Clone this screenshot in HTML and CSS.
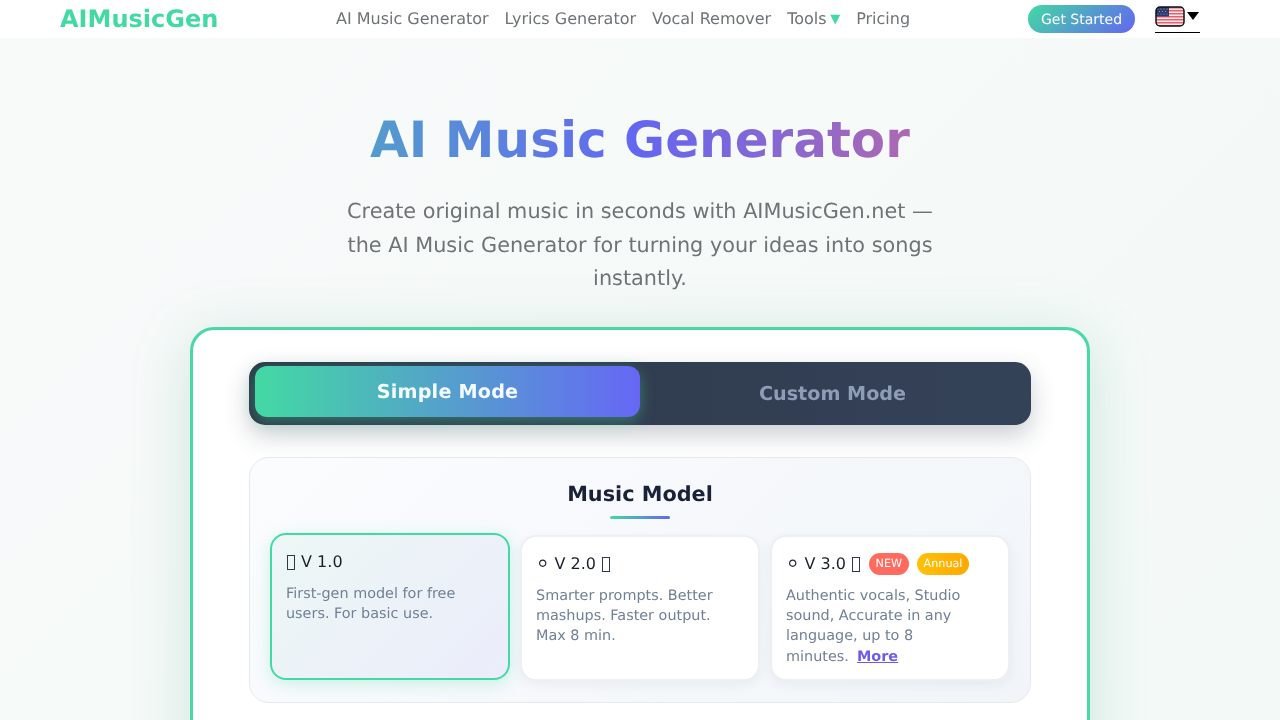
FILE: index.html
```html
<!DOCTYPE html>
<html lang="en">
<head>
<meta charset="utf-8">
<title>AI Music Generator</title>
<link rel="stylesheet" href="styles.css">
</head>
<body>
<header class="header">
  <div class="logo">AIMusicGen</div>
  <nav class="nav">
    <a>AI Music Generator</a>
    <a>Lyrics Generator</a>
    <a>Vocal Remover</a>
    <a class="tools">Tools <span class="caret">▼</span></a>
    <a>Pricing</a>
  </nav>
  <div class="actions">
    <button class="cta">Get Started</button>
    <div class="lang">
      <svg class="flag" width="30" height="21" viewBox="0 0 30 21">
        <defs><clipPath id="fc"><rect x="1" y="1" width="28" height="19" rx="4"/></clipPath></defs>
        <g clip-path="url(#fc)">
          <rect width="30" height="21" fill="#f9e9ea"/>
          <g fill="#e8606e">
            <rect y="1" width="30" height="1.500"/>
            <rect y="4" width="30" height="1.500"/>
            <rect y="7" width="30" height="1.500"/>
            <rect y="10" width="30" height="1.500"/>
            <rect y="13" width="30" height="1.500"/>
            <rect y="16" width="30" height="1.500"/>
            <rect y="19" width="30" height="1.500"/>
          </g>
          <rect width="14" height="10.500" fill="#2c3a6e"/>
          <g fill="#aab4dc"><circle cx="3" cy="3" r=".5"/><circle cx="6" cy="3" r=".5"/><circle cx="9" cy="3" r=".5"/><circle cx="12" cy="3" r=".5"/><circle cx="4.500" cy="5.500" r=".5"/><circle cx="7.500" cy="5.500" r=".5"/><circle cx="10.500" cy="5.500" r=".5"/><circle cx="3" cy="8" r=".5"/><circle cx="6" cy="8" r=".5"/><circle cx="9" cy="8" r=".5"/><circle cx="12" cy="8" r=".5"/></g>
        </g>
        <rect x="1" y="1" width="28" height="19" rx="4" fill="none" stroke="#111" stroke-width="1.500"/>
      </svg>
      <svg class="arrow" width="12" height="8" viewBox="0 0 12 8"><path d="M0 0h12L6 8z" fill="#000"/></svg>
    </div>
  </div>
</header>
<main class="main">
  <h1 class="title">AI Music Generator</h1>
  <p class="subtitle">Create original music in seconds with AIMusicGen.net — the AI Music Generator for turning your ideas into songs instantly.</p>
  <section class="panel">
    <div class="modes">
      <button class="mode mode-active">Simple Mode</button>
      <button class="mode">Custom Mode</button>
    </div>
    <div class="models">
      <h2 class="models-title">Music Model</h2>
      <div class="rule"></div>
      <div class="cards">
        <article class="card card-active">
          <div class="card-head"><span><span class="tofu"></span> V 1.0</span></div>
          <p class="card-text">First-gen model for free users. For basic use.</p>
        </article>
        <article class="card">
          <div class="card-head"><span>⚪ V 2.0 <span class="tofu"></span></span></div>
          <p class="card-text">Smarter prompts. Better mashups. Faster output. Max 8 min.</p>
        </article>
        <article class="card">
          <div class="card-head"><span>⚪ V 3.0 <span class="tofu"></span></span><span class="badge badge-new">NEW</span><span class="badge badge-annual">Annual</span></div>
          <p class="card-text">Authentic vocals, Studio sound, Accurate in any language, up to 8 minutes.&nbsp;&nbsp;<a class="more">More</a></p>
        </article>
      </div>
    </div>
  </section>
</main>
</body>
</html>
```
FILE: styles.css
```css
* { box-sizing: border-box; }
html, body { margin: 0; height: 720px; overflow: hidden; }
body {
  font-family: "DejaVu Sans", sans-serif;
  text-rendering: geometricPrecision;
  background: linear-gradient(135deg, #f8fafa 0%, #f3f9f7 100%);
  color: #1a202c;
}
.header {
  height: 38px;
  background: #fff;
  padding: 0 80px 0 60px;
  display: flex;
  align-items: center;
  will-change: transform;
}
.logo {
  font-size: 24px;
  font-weight: 700;
  color: #43d9a3;
  width: 276px;
}
.nav { display: flex; gap: 16px; font-size: 16px; line-height: 20px; color: #6f7376; }
.caret { color: #43d9a3; font-size: 13px; margin-left: -1.500px; vertical-align: 1px; }
.actions { margin-left: auto; display: flex; align-items: flex-start; gap: 20px; }
.cta {
  width: 107px;
  height: 28px;
  padding: 1px 0 0;
  border: 0;
  border-radius: 14px;
  background: linear-gradient(135deg, #43d9a3, #6366f1);
  color: #fff;
  font: 14px "DejaVu Sans", sans-serif;
  text-rendering: geometricPrecision;
}
.lang {
  width: 45px;
  height: 28px;
  border-bottom: 1px solid #000;
  display: flex;
  align-items: flex-start;
}
.flag { display: block; margin-top: 1px; }
.arrow { margin: 7px 0 0 2px; }
.main {
  display: flex;
  flex-direction: column;
  align-items: center;
  padding: 66px 60px 0;
  will-change: transform;
}
.title {
  margin: 0;
  width: 1160px;
  text-align: center;
  font-size: 50px;
  line-height: 72px;
  font-weight: 700;
  background: linear-gradient(90deg, #43d9a3, #6366f1 50%, #ff6b6b);
  background-clip: text;
  -webkit-background-clip: text;
  color: transparent;
}
.subtitle {
  margin: 19.400px 0 0;
  width: 600px;
  text-align: center;
  font-size: 20.800px;
  line-height: 33.280px;
  color: #6f7376;
}
.panel {
  margin-top: 31.800px;
  width: 900px;
  height: 500px;
  flex: none;
  background: #fff;
  border: 3px solid #4ad9a5;
  border-radius: 24px;
  padding: 32px 56px;
  box-shadow: 0 10px 60px rgba(67, 160, 130, .22);
}
.modes {
  height: 63px;
  border-radius: 16px;
  background: linear-gradient(90deg, #2d3748, #344258);
  display: flex;
  padding: 4px 6px 0;
  box-shadow: 0 10px 25px rgba(45, 55, 72, .25);
}
.mode {
  flex: 1;
  border: 0;
  background: none;
  font: 700 19.200px "DejaVu Sans", sans-serif;
  text-rendering: geometricPrecision;
  color: #8e9db5;
  height: 55px;
}
.mode-active {
  height: 51px;
  border-radius: 12px;
  color: #f4fbff;
  letter-spacing: .2px;
  background: linear-gradient(90deg, #43d9a3, #6667f5);
  box-shadow: 0 4px 15px rgba(67, 217, 163, .4);
}
.models {
  margin-top: 32px;
  height: 246px;
  border: 1px solid #e5e9ef;
  border-radius: 20px;
  padding: 22px 20px 0;
  background: linear-gradient(135deg, #fbfcfe, #f1f5f9);
}
.models-title {
  margin: 0;
  font-size: 20.800px;
  line-height: 28px;
  text-align: center;
  color: #1a2238;
}
.rule {
  width: 60px;
  height: 3px;
  margin: 8px auto 0;
  border-radius: 2px;
  background: linear-gradient(90deg, #43d9a3, #6366f1);
}
.cards { display: grid; grid-template-columns: repeat(3, 1fr); gap: 10px; margin-top: 16px; }
.card {
  height: 146px;
  padding: 14px 14px;
  background: #fff;
  border: 2px solid #eceff3;
  border-radius: 16px;
  box-shadow: 0 4px 12px rgba(45, 55, 72, .06);
}
.card-active {
  height: 147px;
  margin-top: -2px;
  border-color: #43d9a3;
  background: linear-gradient(135deg, #edf7f5, #ebedfb);
  box-shadow: 0 4px 16px rgba(67, 217, 163, .25);
}
.card-head { display: flex; align-items: center; gap: 8px; font-size: 16px; line-height: 26px; height: 26px; white-space: nowrap; }
.tofu {
  display: inline-block;
  width: 8px;
  height: 15px;
  margin: 0 1px;
  border: 1px solid #2d3748;
  vertical-align: -3px;
}
.badge { font-size: 11.200px; line-height: 22px; height: 22px; border-radius: 11px; padding: 0 6.500px; color: #fff; }
.badge-new { background: #ff6b5f; }
.badge-annual { background: linear-gradient(90deg, #ffc107, #ffa800); padding: 0 7px; }
.card-text { margin: 9px 0 0; font-size: 14.400px; line-height: 20px; color: #718096; }
.more { font-weight: 700; color: #6c5ce7; text-decoration: underline; margin-left: -1px; line-height: 22px; }
```
